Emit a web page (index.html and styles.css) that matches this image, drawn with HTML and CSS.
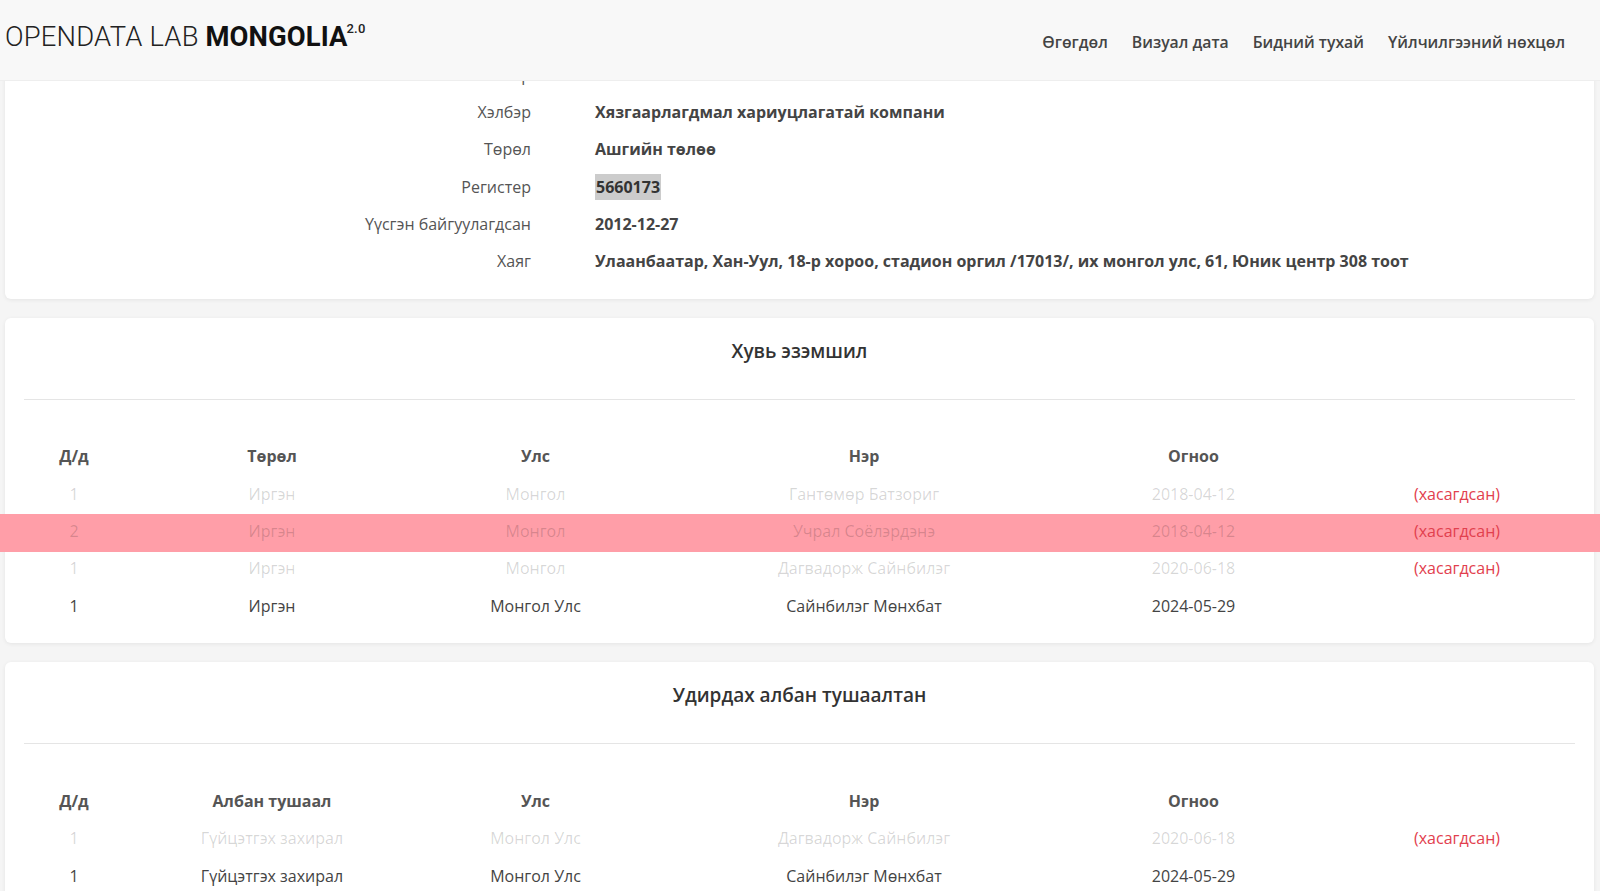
FILE: index.html
```html
<!DOCTYPE html>
<html lang="mn">
<head>
    <meta charset="UTF-8">
    <title>Компанийн мэдээлэл - OpenData Lab Mongolia</title>
    <meta name="viewport" content="width=device-width, initial-scale=1.0"/>
    <link rel="stylesheet" href="styles.css">
</head>
<body>
    <header class="topbar">
        <a class="logo" href="#">OPENDATA LAB <b>MONGOLIA</b><sup>2.0</sup></a>
        <nav class="menu">
            <a href="#">Өгөгдөл</a>
            <a href="#">Визуал дата</a>
            <a href="#">Бидний тухай</a>
            <a href="#">Үйлчилгээний нөхцөл</a>
        </nav>
    </header>

    <main class="page">
        <section class="card info-card">
            <div class="info-row"><span class="info-label">Нэр</span><span class="info-value">Монголиан Бонанза ХХК</span></div>
            <div class="info-row"><span class="info-label">Хэлбэр</span><span class="info-value">Хязгаарлагдмал хариуцлагатай компани</span></div>
            <div class="info-row"><span class="info-label">Төрөл</span><span class="info-value">Ашгийн төлөө</span></div>
            <div class="info-row"><span class="info-label">Регистер</span><span class="info-value"><mark class="reg">5660173</mark></span></div>
            <div class="info-row"><span class="info-label">Үүсгэн байгуулагдсан</span><span class="info-value">2012-12-27</span></div>
            <div class="info-row"><span class="info-label">Хаяг</span><span class="info-value">Улаанбаатар, Хан-Уул, 18-р хороо, стадион оргил /17013/, их монгол улс, 61, Юник центр 308 тоот</span></div>
        </section>

        <section class="card">
            <h4 class="card-title">Хувь эзэмшил</h4>
            <hr>
            <div class="grid">
                <div class="tr th">
                    <span>Д/д</span><span>Төрөл</span><span>Улс</span><span>Нэр</span><span>Огноо</span><span></span>
                </div>
                <div class="tr removed">
                    <span>1</span><span>Иргэн</span><span>Монгол</span><span>Гантөмөр Батзориг</span><span>2018-04-12</span><span class="tag">(хасагдсан)</span>
                </div>
                <div class="tr removed hover">
                    <span>2</span><span>Иргэн</span><span>Монгол</span><span>Учрал Соёлэрдэнэ</span><span>2018-04-12</span><span class="tag">(хасагдсан)</span>
                </div>
                <div class="tr removed">
                    <span>1</span><span>Иргэн</span><span>Монгол</span><span>Дагвадорж Сайнбилэг</span><span>2020-06-18</span><span class="tag">(хасагдсан)</span>
                </div>
                <div class="tr">
                    <span>1</span><span>Иргэн</span><span>Монгол Улс</span><span>Сайнбилэг Мөнхбат</span><span>2024-05-29</span><span></span>
                </div>
            </div>
        </section>

        <section class="card">
            <h4 class="card-title">Удирдах албан тушаалтан</h4>
            <hr>
            <div class="grid">
                <div class="tr th">
                    <span>Д/д</span><span>Албан тушаал</span><span>Улс</span><span>Нэр</span><span>Огноо</span><span></span>
                </div>
                <div class="tr removed">
                    <span>1</span><span>Гүйцэтгэх захирал</span><span>Монгол Улс</span><span>Дагвадорж Сайнбилэг</span><span>2020-06-18</span><span class="tag">(хасагдсан)</span>
                </div>
                <div class="tr">
                    <span>1</span><span>Гүйцэтгэх захирал</span><span>Монгол Улс</span><span>Сайнбилэг Мөнхбат</span><span>2024-05-29</span><span></span>
                </div>
            </div>
        </section>
    </main>
</body>
</html>
```

FILE: styles.css
```css
body {
    margin: 0;
    font-family: "Open Sans", "Noto Sans", sans-serif;
    font-size: 16px;
    color: #444;
    background-color: #f5f5f5;
}
a {
    text-decoration: none;
    color: inherit;
}

/* top bar */
.topbar {
    position: fixed;
    top: 0;
    left: 0;
    right: 0;
    z-index: 10;
    height: 81px;
    display: flex;
    justify-content: space-between;
    align-items: flex-start;
    padding: 0 23px 0 5px;
    background: #f8f8f8;
    border-bottom: 1px solid #eee;
    box-sizing: border-box;
}
.logo {
    font-family: Roboto, "Liberation Sans", sans-serif;
    font-size: 27.4px;
    font-weight: 300;
    color: #222;
    line-height: 32px;
    padding-top: 21px;
    letter-spacing: 0.2px;
}
.logo b {
    font-weight: 700;
    color: #111;
    letter-spacing: 0.1px;
}
.logo sup {
    font-size: 13px;
    font-weight: 500;
    vertical-align: top;
    line-height: 13px;
    position: relative;
    top: 1px;
    margin-left: -1px;
}
.menu {
    display: flex;
    padding-top: 30px;
}
.menu a {
    padding: 0 12px;
    font-size: 15.8px;
    font-weight: 600;
    color: #444;
    line-height: 24px;
}

/* content */
.page {
    padding: 5px 6px 5px 5px;
}
.card {
    background: #fff;
    border-radius: 6px;
    box-shadow: 0 1px 4px rgba(0,0,0,0.07);
    margin-bottom: 19px;
    padding: 0 19px 19px 19px;
}
.info-card {
    padding: 51px 0 19px 0;
}
.info-row {
    display: grid;
    grid-template-columns: 526px 1fr;
    column-gap: 64px;
    height: 37.3px;
    align-items: center;
}
.info-label {
    text-align: right;
    color: #555;
}
.info-value {
    font-weight: 700;
    color: #444;
}
.reg {
    background: #ccc;
    color: #333;
    padding: 2px 1px;
}

.card-title {
    margin: 0;
    padding-top: 18px;
    text-align: center;
    font-size: 19px;
    font-weight: 600;
    line-height: 30px;
    color: #333;
}
.card hr {
    border: none;
    border-top: 1px solid #e5e5e5;
    margin: 33px 0 38px 0;
}

/* tables */
.tr {
    display: grid;
    grid-template-columns: 100px 296px 231px 426px 233px 1fr;
    height: 37.3px;
    align-items: center;
    text-align: center;
    color: #444;
}
.tr .tag {
    padding-left: 29px;
}
.th {
    font-weight: 700;
    color: #555;
}
.removed span {
    color: rgba(0,0,0,0.17);
}
.removed .tag {
    color: #e2404e;
}
.hover {
    position: relative;
    z-index: 0;
    margin: 0 -25px 0 -24px;
    padding: 0 25px 0 24px;
}
.hover::before {
    content: "";
    position: absolute;
    left: 0;
    right: 0;
    top: 2px;
    bottom: -2px;
    z-index: -1;
    background: #ff9ea8;
}
```
